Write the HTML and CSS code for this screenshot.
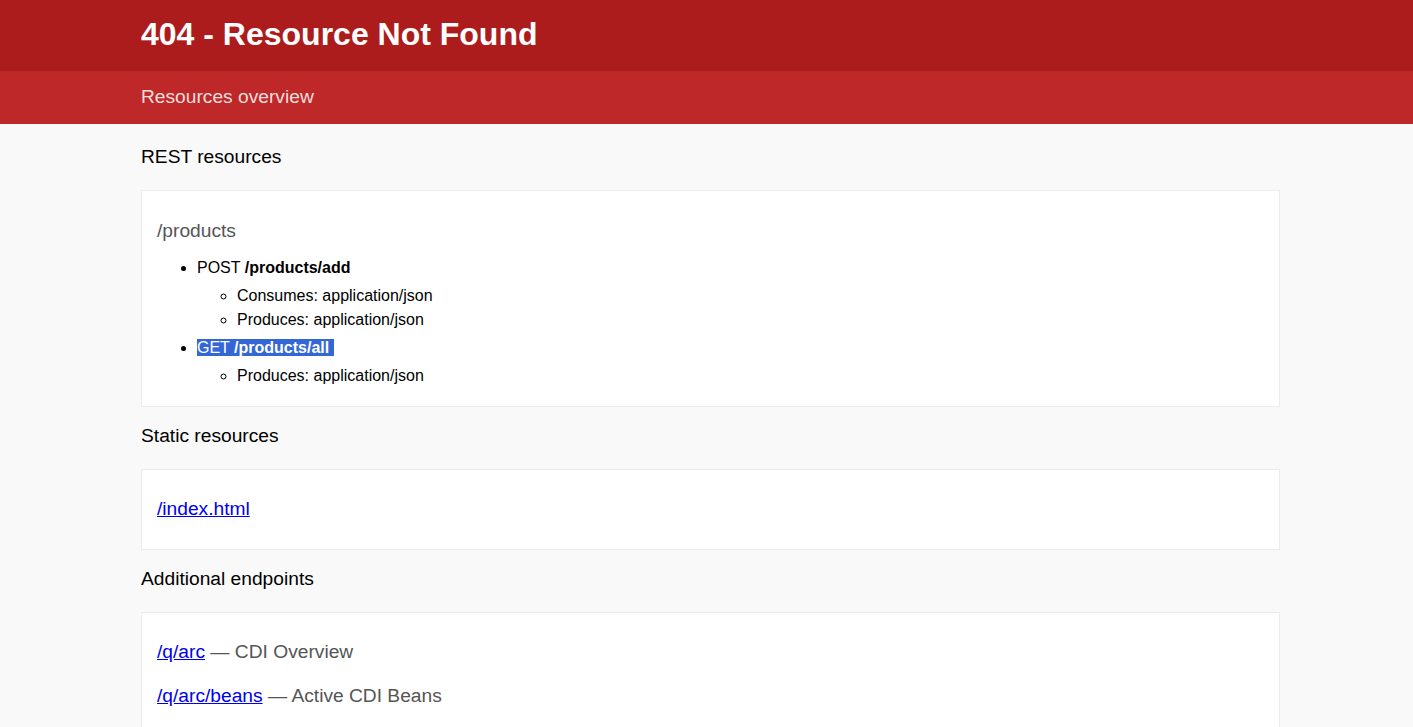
FILE: index.html
```html
<!DOCTYPE html>
<html lang="en">
<head>
<meta charset="utf-8">
<title>404 - Resource Not Found</title>
<link rel="stylesheet" href="styles.css">
</head>
<body>
<header class="page-header">
  <div class="container">
    <h1 class="title">404 - Resource Not Found</h1>
  </div>
</header>
<div class="subheader">
  <div class="container">
    <h2 class="subtitle">Resources overview</h2>
  </div>
</div>
<main class="container content">
  <div class="intro">REST resources</div>
  <div class="resources">
    <h3 class="res-path">/products</h3>
    <ul class="endpoints">
      <li>POST <strong>/products/add</strong>
        <ul class="mimes">
          <li>Consumes: application/json</li>
          <li>Produces: application/json</li>
        </ul>
      </li>
      <li><span class="selected">GET <strong>/products/all</strong></span>
        <ul class="mimes">
          <li>Produces: application/json</li>
        </ul>
      </li>
    </ul>
  </div>

  <div class="intro">Static resources</div>
  <div class="resources">
    <p class="entry"><a href="#">/index.html</a></p>
  </div>

  <div class="intro">Additional endpoints</div>
  <div class="resources">
    <p class="entry"><a href="#">/q/arc</a> <span class="desc">— CDI Overview</span></p>
    <p class="entry"><a href="#">/q/arc/beans</a> <span class="desc">— Active CDI Beans</span></p>
    <p class="entry"><a href="#">/q/arc/observers</a> <span class="desc">— Active CDI Observers</span></p>
  </div>
</main>
</body>
</html>
```
FILE: styles.css
```css
html {
  scrollbar-width: none;
}
html::-webkit-scrollbar {
  display: none;
}
body {
  margin: 0;
  background: #f9f9f9;
  font-family: "Liberation Sans", Arial, Helvetica, sans-serif;
  font-size: 16px;
  line-height: 1.4;
  color: #000;
}
.container {
  box-sizing: border-box;
  padding: 0 133px 0 141px;
}
.page-header {
  background-color: #ad1c1c;
}
.title {
  margin: 0;
  padding: 4px 0 7px 0;
  font-size: 32px;
  line-height: 60px;
  font-weight: 700;
  color: #fff;
}
.subheader {
  background-color: #be2828;
}
.subtitle {
  margin: 0;
  padding: 6px 0 7px 0;
  font-size: 19.2px;
  line-height: 40px;
  font-weight: 400;
  color: rgba(255, 255, 255, 0.85);
}
.content {
  padding-top: 17px;
  padding-bottom: 16px;
}
.intro {
  font-size: 19.2px;
  line-height: 32px;
  font-weight: 400;
  margin: 13px 0 17px 0;
}
.content > .intro:first-child {
  margin-top: 0;
  margin-bottom: 17px;
}
.resources {
  background: #fff;
  border: 1px solid #ececec;
  padding: 15px;
}
.res-path {
  margin: 5px 0 5px 0;
  font-size: 19.2px;
  line-height: 40px;
  font-weight: 400;
  color: #555;
}
.endpoints,
.mimes {
  margin: 4px 0;
  padding-left: 40px;
  line-height: 24px;
}
.endpoints {
  list-style-type: disc;
  margin-bottom: 0;
}
.endpoints > li:last-child > .mimes {
  margin-bottom: 3px;
}
.mimes {
  list-style-type: circle;
}
.selected {
  background: #3367d6;
  color: #fff;
  padding-right: 4.5px;
}
.entry {
  margin: 4.25px 0;
  font-size: 19.2px;
  line-height: 40px;
}
.entry a {
  color: #0000ee;
  text-decoration: underline;
}
.desc {
  color: #555;
}
```
